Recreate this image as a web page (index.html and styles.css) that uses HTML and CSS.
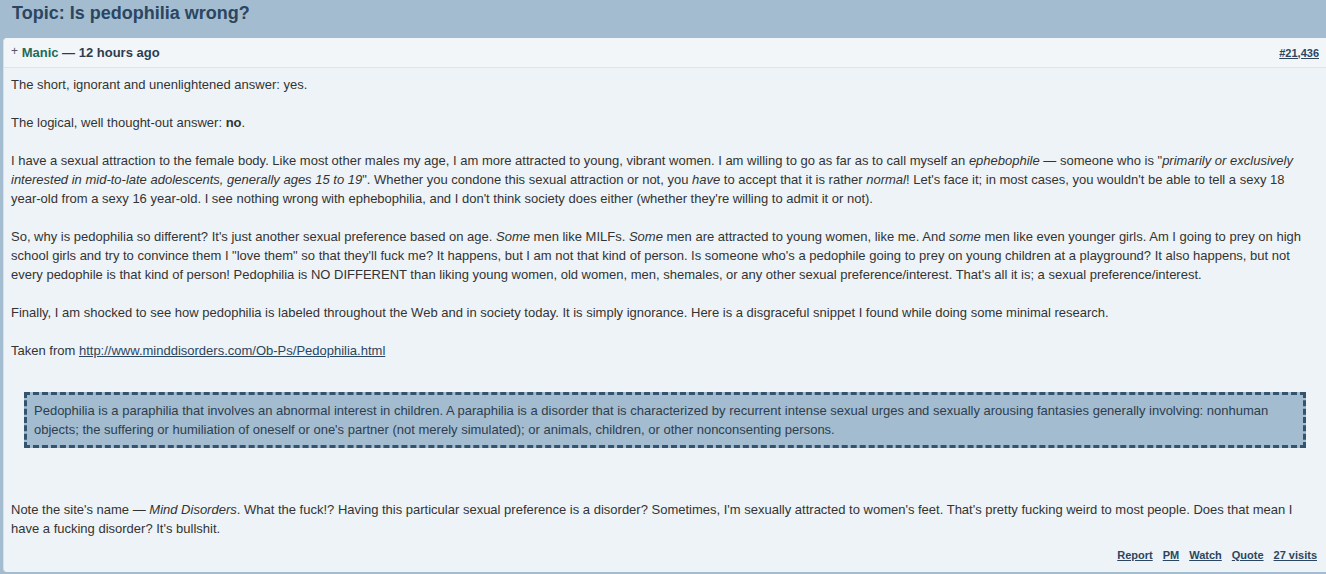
FILE: index.html
```html
<!DOCTYPE html>
<html>
<head>
<meta charset="utf-8">
<link rel="stylesheet" href="styles.css">
</head>
<body>
<h1 class="topic">Topic: Is pedophilia wrong?</h1>
<div class="post">
  <div class="post-head">
    <div class="author"><span class="plus">+</span> <span class="name">Manic</span> — 12 hours ago</div>
    <a class="permalink" href="#">#21,436</a>
  </div>
  <div class="post-body">
    <p>The short, ignorant and unenlightened answer: yes.</p>
    <p>The logical, well thought-out answer: <b>no</b>.</p>
    <p>I have a sexual attraction to the female body. Like most other males my age, I am more attracted to young, vibrant women. I am willing to go as far as to call myself an <i>ephebophile</i> — someone who is "<i>primarily or exclusively interested in mid-to-late adolescents, generally ages 15 to 19</i>". Whether you condone this sexual attraction or not, you <i>have</i> to accept that it is rather <i>normal</i>! Let's face it; in most cases, you wouldn't be able to tell a sexy 18 <span class="nw">year-old</span> from a sexy 16 <span class="nw">year-old</span>. I see nothing wrong with ephebophilia, and I don't think society does either (whether they're willing to admit it or not).</p>
    <p>So, why is pedophilia so different? It's just another sexual preference based on age. <i>Some</i> men like MILFs. <i>Some</i> men are attracted to young women, like me. And <i>some</i> men like even younger girls. Am I going to prey on high school girls and try to convince them I "love them" so that they'll fuck me? It happens, but I am not that kind of person. Is someone who's a pedophile going to prey on young children at a playground? It also happens, but not every pedophile is that kind of person! Pedophilia is NO DIFFERENT than liking young women, old women, men, shemales, or any other sexual preference/interest. That's all it is; a sexual preference/interest.</p>
    <p>Finally, I am shocked to see how pedophilia is labeled throughout the Web and in society today. It is simply ignorance. Here is a disgraceful snippet I found while doing some minimal research.</p>
    <p>Taken from <a href="#">http://www.minddisorders.com/Ob-Ps/Pedophilia.html</a></p>
    <blockquote class="quote">Pedophilia is a paraphilia that involves an abnormal interest in children. A paraphilia is a disorder that is characterized by recurrent intense sexual urges and sexually arousing fantasies generally involving: nonhuman objects; the suffering or humiliation of oneself or one's partner (not merely simulated); or animals, children, or other nonconsenting persons.</blockquote>
    <p class="after-quote">Note the site's name — <i>Mind Disorders</i>. What the fuck!? Having this particular sexual preference is a disorder? Sometimes, I'm sexually attracted to women's feet. That's pretty fucking weird to most people. Does that mean I have a fucking disorder? It's bullshit.</p>
  </div>
  <div class="post-foot">
    <a href="#">Report</a>
    <a href="#">PM</a>
    <a href="#">Watch</a>
    <a href="#">Quote</a>
    <a href="#">27 visits</a>
  </div>
</div>
</body>
</html>
```

FILE: styles.css
```css
html, body {
  margin: 0;
  padding: 0;
}
body {
  background: #a3bcd0;
  font-family: "Liberation Sans", Arial, sans-serif;
  color: #333;
  padding: 0 0 0 3px;
  height: 574px;
  overflow: hidden;
}
.topic {
  margin: 0;
  padding: 2px 0 0 9px;
  height: 38px;
  box-sizing: border-box;
  font-size: 18px;
  font-weight: bold;
  color: #2b4660;
  line-height: 22px;
}
.post {
  display: flex;
  flex-direction: column;
  background: #eef3f7;
  border-radius: 4px 0 0 4px;
  border-left: 1px solid #d6e1ea;
  height: 534px;
  box-sizing: border-box;
  padding-bottom: 10px;
}
.post-head {
  display: flex;
  justify-content: space-between;
  align-items: center;
  background: #f3f6f9;
  border-bottom: 1px solid #dde5ec;
  border-radius: 4px 0 0 0;
  height: 30px;
  flex: none;
  box-sizing: border-box;
  padding: 0 7px 0 7px;
}
.author {
  font-size: 13px;
  font-weight: bold;
  color: #2b3d4f;
}
.plus {
  font-weight: normal;
  color: #556;
  font-size: 12px;
  position: relative;
  top: -2px;
}
.name {
  color: #1e6b56;
}
.permalink {
  font-size: 11px;
  font-weight: bold;
  color: #2b4660;
}
.post-body {
  padding: 7px 8px 0 7px;
  font-size: 13px;
  line-height: 19px;
  color: #333;
}
.post-body p {
  margin: 0 0 19px 0;
}
.post-body a {
  color: #2b4660;
}
.nw {
  white-space: nowrap;
}
.quote {
  margin: 32px 12px 0 13px;
  background: #a3bcd0;
  border: 3px dashed #34536e;
  padding: 6px 7px 6px 7px;
  color: #2e3e4e;
}
.post-body .after-quote {
  margin: 52px 0 0 0;
}
.post-foot {
  display: flex;
  justify-content: flex-end;
  gap: 10px;
  margin-top: auto;
  padding: 0 9px 0 0;
  font-size: 11px;
  font-weight: bold;
  line-height: 14px;
}
.post-foot a {
  color: #2b4660;
}
```
